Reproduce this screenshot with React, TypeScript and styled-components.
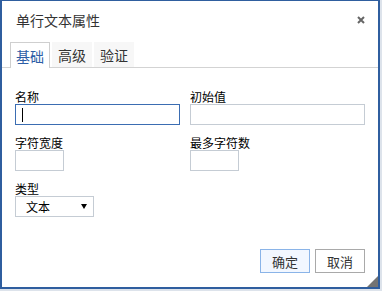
import React from 'react';
import styled, { createGlobalStyle } from 'styled-components';

const GlobalStyle = createGlobalStyle`
  body {
    margin: 0;
    background: #dde3eb;
    font-family: "Noto Sans CJK SC", "Noto Sans", sans-serif;
  }
`;

const Dialog = styled.div`
  position: relative;
  box-sizing: border-box;
  width: 380px;
  height: 289px;
  display: flex;
  flex-direction: column;
  background: #fff;
  border: solid #2f5e9f;
  border-width: 1px 2px 2px 2px;
`;

const Header = styled.div`
  height: 41px;
  display: flex;
  align-items: flex-start;
  justify-content: space-between;
  padding: 10px 13px 0 14px;
  box-sizing: border-box;
`;

const Title = styled.h1`
  margin: 0;
  font-size: 14px;
  font-weight: normal;
  line-height: 18px;
  color: #333;
`;

const Close = styled.button`
  margin-top: 5px;
  width: 8px;
  height: 8px;
  padding: 0;
  border: none;
  background: none;
  display: flex;
  cursor: pointer;
`;

const TabBar = styled.div`
  display: flex;
  gap: 2px;
  padding-left: 8px;
  height: 25px;
  border-bottom: 1px solid #d3d3d3;
`;

const Tab = styled.div<{ $active?: boolean }>`
  box-sizing: border-box;
  height: ${(p) => (p.$active ? '26px' : '25px')};
  padding: 0 5px;
  display: flex;
  align-items: center;
  font-size: 14px;
  color: ${(p) => (p.$active ? '#2c5da6' : '#333')};
  background: ${(p) => (p.$active ? '#fff' : '#f7f7f7')};
  border: 1px solid ${(p) => (p.$active ? '#cfcfcf' : 'transparent')};
  border-bottom: none;
  cursor: pointer;
`;

const Body = styled.div`
  flex: 1;
  display: grid;
  grid-template-columns: 175px 175px;
  grid-auto-rows: 35px;
  row-gap: 11px;
  align-content: start;
  padding: 22px 0 0 13px;
`;

const Field = styled.div`
  position: relative;
  display: flex;
  flex-direction: column;
  align-items: flex-start;
`;

const Label = styled.label`
  font-size: 12px;
  line-height: 14px;
  color: #000;
`;

const Input = styled.input<{ $width: number; $focus?: boolean }>`
  box-sizing: border-box;
  width: ${(p) => p.$width}px;
  height: 21px;
  margin: 0;
  padding: 0 4px;
  font: 12px "Noto Sans CJK SC", sans-serif;
  border: 1px solid ${(p) => (p.$focus ? '#3b6db2' : '#c5ccd4')};
  outline: none;
  background: #fff;
`;

const Caret = styled.span`
  position: absolute;
  left: 7px;
  top: 18px;
  width: 1px;
  height: 14px;
  background: #000;
`;

const Select = styled.div`
  box-sizing: border-box;
  width: 79px;
  height: 21px;
  display: flex;
  align-items: center;
  justify-content: space-between;
  padding: 0 6px 0 10px;
  border: 1px solid #c5ccd4;
  font-size: 12px;
  color: #000;
`;

const Footer = styled.div`
  display: flex;
  justify-content: flex-end;
  gap: 5px;
  padding: 0 13px 14px 0;
`;

const Button = styled.button<{ $primary?: boolean }>`
  box-sizing: border-box;
  width: 50px;
  height: 24px;
  padding: 0;
  font: 13px "Noto Sans CJK SC", sans-serif;
  color: #333;
  background: ${(p) => (p.$primary ? '#f2f7ff' : '#fff')};
  border: 1px solid ${(p) => (p.$primary ? '#8ab4e8' : '#a9a9a9')};
  cursor: pointer;
`;

const Grip = styled.svg`
  position: absolute;
  right: 0;
  bottom: 0;
`;

export default function App() {
  return (
    <>
      <GlobalStyle />
      <Dialog>
        <Header>
          <Title>单行文本属性</Title>
          <Close aria-label="关闭">
            <svg width="8" height="8" viewBox="0 0 8 8">
              <path d="M1 1L7 7M7 1L1 7" stroke="#666" strokeWidth="2" />
            </svg>
          </Close>
        </Header>
        <TabBar>
          <Tab $active>基础</Tab>
          <Tab>高级</Tab>
          <Tab>验证</Tab>
        </TabBar>
        <Body>
          <Field>
            <Label>名称</Label>
            <Input $width={165} $focus readOnly />
            <Caret />
          </Field>
          <Field>
            <Label>初始值</Label>
            <Input $width={175} readOnly />
          </Field>
          <Field>
            <Label>字符宽度</Label>
            <Input $width={49} readOnly />
          </Field>
          <Field>
            <Label>最多字符数</Label>
            <Input $width={49} readOnly />
          </Field>
          <Field>
            <Label>类型</Label>
            <Select>
              <span>文本</span>
              <svg width="6" height="5" viewBox="0 0 6 5">
                <path d="M0 0H6L3 5Z" fill="#000" />
              </svg>
            </Select>
          </Field>
        </Body>
        <Footer>
          <Button $primary>确定</Button>
          <Button>取消</Button>
        </Footer>
        <Grip width="11" height="11" viewBox="0 0 11 11">
          <path d="M11 0V11H0Z" fill="#747474" />
        </Grip>
      </Dialog>
    </>
  );
}
